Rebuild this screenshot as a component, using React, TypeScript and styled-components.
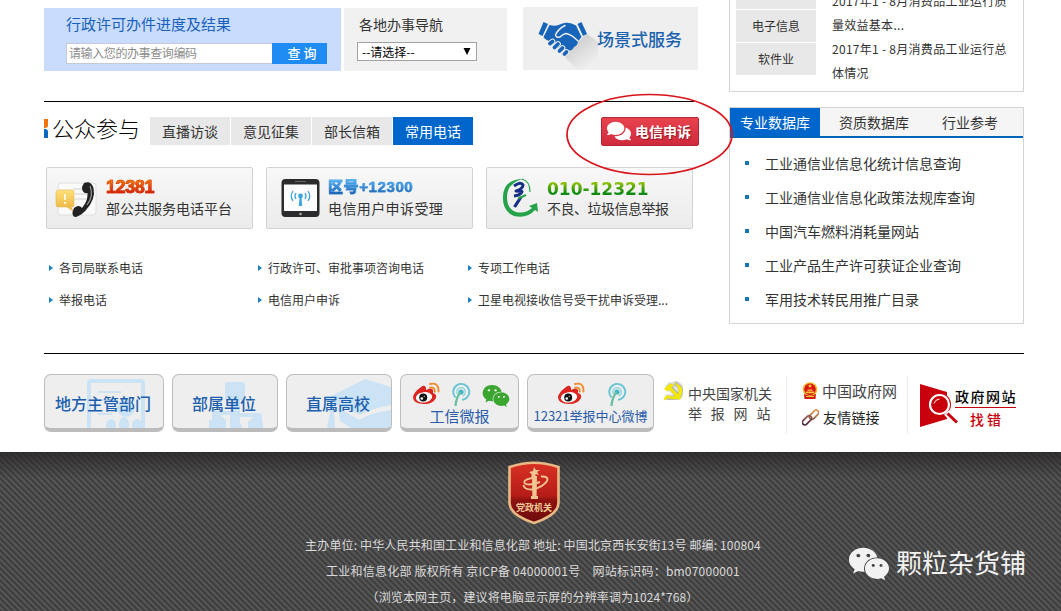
import React from 'react';
import styled, { createGlobalStyle, css } from 'styled-components';
import { FaComments, FaWeixin } from 'react-icons/fa';

const GlobalStyle = createGlobalStyle`
  * { box-sizing: border-box; }
  html, body { margin: 0; padding: 0; background: #fff; }
  body {
    font-family: "Noto Sans CJK SC", sans-serif;
    font-size: 12px;
    color: #333;
    overflow: hidden;
  }
  ul { list-style: none; margin: 0; padding: 0; }
  h2 { margin: 0; }
  svg { display: block; flex: none; }
`;

const Page = styled.div`
  position: relative;
  width: 1061px;
  height: 611px;
  overflow: hidden;
  background: #fff;
`;

const Main = styled.main`
  display: flex;
  justify-content: space-between;
  width: 980px;
  height: 353px;
  margin-left: 44px;
`;

const LeftColumn = styled.div`
  width: 655px;
  padding-top: 7px;
`;

const RightColumn = styled.aside`
  width: 295px;
`;

const Label = styled.span<{ $size?: number; $color?: string; $spacing?: number; $weight?: number }>`
  display: block;
  white-space: nowrap;
  font-size: ${p => p.$size ?? 12}px;
  line-height: 20px;
  color: ${p => p.$color ?? '#333'};
  letter-spacing: ${p => p.$spacing ?? 0}px;
  font-weight: ${p => p.$weight ?? 400};
`;

/* ---------- search strip ---------- */

const ServiceRow = styled.div`
  display: flex;
  height: 64px;
`;

const SearchPanel = styled.section`
  width: 297px;
  height: 63px;
  margin-top: 1px;
  padding: 6px 0 0 22px;
  background: #c9dcfe;
`;

const SearchForm = styled.form`
  display: flex;
  margin-top: 9px;
`;

const SearchInput = styled.input`
  width: 206px;
  height: 21px;
  padding: 0 0 3px 2px;
  border: 1px solid #c3cad6;
  border-right: 0;
  border-radius: 0;
  background: #fff;
  font: 12px "Noto Sans CJK SC", sans-serif;
  letter-spacing: -0.4px;
  &::placeholder { color: #8c8c8c; opacity: 1; }
`;

const SearchButton = styled.button`
  width: 55px;
  height: 21px;
  padding: 0 0 2px 5px;
  border: 0;
  background: #1f8cf4;
  color: #fff;
  font: 500 13px/19px "Noto Sans CJK SC", sans-serif;
`;

const RegionPanel = styled.section`
  width: 163px;
  height: 63px;
  margin: 1px 0 0 3px;
  padding: 6px 0 0 13px;
  background: #f1f1f1;
`;

const RegionTitle = styled(Label)`
  margin-left: 2px;
`;

const SelectBox = styled.div`
  display: flex;
  align-items: center;
  justify-content: space-between;
  width: 120px;
  height: 19px;
  margin-top: 8px;
  padding: 0 5px 0 4px;
  border: 1px solid #a2a2a2;
  background: #fff;
`;

const ScenePanel = styled.section`
  display: flex;
  width: 175px;
  height: 63px;
  margin-left: 16px;
  background: #efefef;
`;

const SceneLabel = styled(Label)`
  margin: 22px 0 0 -1px;
`;

/* ---------- participation ---------- */

const Participation = styled.section`
  width: 650px;
  margin-top: 30px;
  border-top: 1px solid #000;
`;

const TabBar = styled.div`
  display: flex;
  width: 655px;
  height: 29px;
  margin-top: 15px;
`;

const Marks = styled.div`
  display: flex;
  flex: none;
  flex-direction: column;
  gap: 1px;
  width: 4px;
  margin: 2px 4px 0 0;
`;

const Mark = styled.i<{ $color: string; $radius: string }>`
  height: 9px;
  background: ${p => p.$color};
  border-radius: ${p => p.$radius};
`;

const Heading = styled.h2`
  flex: none;
  width: 98px;
  font-size: 22px;
  font-weight: 300;
  line-height: 21px;
  color: #000;
`;

const Tab = styled.div<{ $active?: boolean }>`
  flex: none;
  width: 80px;
  height: 28px;
  margin-right: 1px;
  font-size: 14px;
  line-height: 28px;
  text-align: center;
  background: ${p => (p.$active ? '#0066cc' : '#e8e8e8')};
  color: ${p => (p.$active ? '#fff' : '#333')};
`;

const ComplaintButton = styled.button`
  display: flex;
  align-items: center;
  gap: 4px;
  width: 98px;
  height: 29px;
  margin-left: auto;
  padding: 0 0 1px 5px;
  border: 1px solid #b32738;
  border-radius: 2px;
  background: linear-gradient(#e8424e, #d02b3d);
  color: #fff;
  font: 700 14px/26px "Noto Sans CJK SC", sans-serif;
  text-shadow: 1px 1px 1px #8e1524;
`;

const HotlineRow = styled.div`
  display: flex;
  gap: 13px;
  margin: 21px 0 0 2px;
`;

const Hotline = styled.div<{ $pad: number; $gap: number }>`
  display: flex;
  flex: none;
  align-items: center;
  gap: ${p => p.$gap}px;
  width: 207px;
  height: 62px;
  padding-left: ${p => p.$pad}px;
  border: 1px solid #d3d3d3;
  border-radius: 2px;
  background: linear-gradient(#f8f8f8, #ebebeb);
`;

const numberFace = {
  red: css`
    font: 700 18px/20px "Liberation Sans", sans-serif;
    letter-spacing: -0.4px;
    background-image: linear-gradient(#f87a00 20%, #cf1508 85%);
    -webkit-text-stroke: 0.6px #d8350a;
  `,
  blue: css`
    font: 900 15px/20px "Liberation Sans", "Noto Sans CJK SC", sans-serif;
    letter-spacing: 0.6px;
    background-image: linear-gradient(#55b6f4 20%, #1a5db3 85%);
    -webkit-text-stroke: 0.4px #3388d4;
  `,
  green: css`
    font: 700 17px/24px "DejaVu Sans", sans-serif;
    letter-spacing: 0;
    background-image: linear-gradient(#96c400 25%, #0f8a13 80%);
  `,
};

const HotlineNumber = styled.div<{ $tone: keyof typeof numberFace }>`
  white-space: nowrap;
  height: 20px;
  ${p => numberFace[p.$tone]}
  -webkit-background-clip: text;
  background-clip: text;
  color: transparent;
`;

const HotlineText = styled(Label)`
  line-height: 22px;
`;

const LinkGrid = styled.ul`
  display: grid;
  grid-template-columns: 209px 210px 230px;
  grid-auto-rows: 32px;
  margin: 23px 0 0 5px;
`;

const LinkItem = styled.li`
  display: flex;
  align-items: center;
  gap: 6px;
  font-size: 12px;
  line-height: 32px;
  white-space: nowrap;
`;

const Arrow = styled.i`
  border: 3px solid transparent;
  border-left: 4px solid #1a7fc8;
  border-right: 0;
`;

/* ---------- right column ---------- */

const IndustryPanel = styled.section`
  display: flex;
  height: 92px;
  border: 1px solid #d4d4d4;
  border-top: 0;
  overflow: hidden;
`;

const IndustryTabs = styled.div`
  display: flex;
  flex-direction: column;
  gap: 1px;
  width: 80px;
  margin-left: 6px;
`;

const IndustryTab = styled.div<{ $cut?: boolean }>`
  height: ${p => (p.$cut ? 9 : 32)}px;
  line-height: 31px;
  background: #e8e8e8;
  text-align: center;
`;

const IndustryNews = styled.div`
  margin: -11px 0 0 16px;
  line-height: 24px;
  white-space: nowrap;
  letter-spacing: 0.28px;
`;

const DataPanel = styled.section`
  height: 217px;
  margin-top: 15px;
  border: 1px solid #d4d4d4;
`;

const DataTabs = styled.div`
  display: flex;
  height: 30px;
  background: #f5f5f5;
  border-bottom: 2px solid #0066b8;
`;

const DataTab = styled.div<{ $active?: boolean; $width: number }>`
  width: ${p => p.$width}px;
  height: 28px;
  font-size: 14px;
  line-height: 29px;
  text-align: center;
  background: ${p => (p.$active ? '#0066cc' : 'transparent')};
  color: ${p => (p.$active ? '#fff' : '#333')};
`;

const DataList = styled.ul`
  padding: 8px 0 0 15px;
`;

const DataItem = styled.li`
  display: flex;
  align-items: center;
  gap: 16px;
  height: 34px;
  font-size: 14px;
  white-space: nowrap;
  &::before {
    content: '';
    width: 4px;
    height: 4px;
    background: #1974b4;
    margin-top: -1px;
  }
`;

/* ---------- bottom row ---------- */

const BottomRow = styled.section`
  display: flex;
  width: 980px;
  height: 99px;
  margin-left: 44px;
  border-top: 1px solid #000;
  padding-top: 20px;
`;

const TileBox = styled.div<{ $width: number }>`
  position: relative;
  flex: none;
  width: ${p => p.$width}px;
  height: 58px;
  margin-right: 8px;
  border: 1px solid #bdbdbd;
  border-bottom: 4px solid #bcbcbc;
  border-radius: 7px;
  background: #eeeeee;
  overflow: hidden;
`;

const TileArt = styled.svg`
  position: absolute;
  right: 0;
  bottom: 0;
`;

const TileCaption = styled.div`
  position: relative;
  padding-top: 16px;
  text-align: center;
  font-size: 16px;
  line-height: 24px;
  color: #1b5fae;
  font-weight: 500;
  text-indent: -2px;
`;

const SocialIcons = styled.div<{ $gap: number }>`
  display: flex;
  justify-content: center;
  align-items: flex-start;
  gap: ${p => p.$gap}px;
  height: 30px;
  padding: 7px 0 0 2px;
`;

const SocialCaption = styled.div<{ $size: number }>`
  text-align: center;
  white-space: nowrap;
  font-size: ${p => p.$size}px;
  line-height: 21px;
  color: #2a5cab;
`;

const Report = styled.div`
  display: flex;
  flex: none;
  gap: 3px;
  width: 125px;
  height: 58px;
  margin-top: 2px;
  padding-top: 4px;
  border-right: 1px solid #ececec;
`;

const ReportText = styled.div`
  padding-top: 3px;
  margin-left: -1px;
`;

const PortalLinks = styled.div`
  flex: none;
  width: 121px;
  height: 58px;
  margin-top: 2px;
  padding: 2px 0 0 15px;
  border-right: 1px solid #ececec;
`;

const PortalLink = styled.div`
  display: flex;
  align-items: center;
  gap: 4px;
  height: 26px;
`;

const ErrorReport = styled.div`
  display: flex;
  padding: 10px 0 0 12px;
`;

const ErrorText = styled.div`
  width: 61px;
  margin: 1px 0 0 -4px;
`;

const ErrorTitle = styled(Label)`
  border-bottom: 1px solid #c8000b;
  line-height: 22px;
`;

const ErrorAction = styled(Label)`
  padding-left: 15px;
  line-height: 22px;
`;

/* ---------- footer ---------- */

const Footer = styled.footer`
  position: relative;
  display: flex;
  flex-direction: column;
  align-items: center;
  height: 159px;
  padding-top: 9px;
  background:
    linear-gradient(rgba(40, 36, 36, 0.75), rgba(50, 50, 50, 0) 26px),
    repeating-linear-gradient(45deg, #3f3f3f 0 1.2px, #595959 2.4px 3px, #3f3f3f 4.243px);
`;

const FooterLines = styled.div`
  display: flex;
  flex-direction: column;
  align-items: center;
  margin-top: 7px;
`;

const FooterLine = styled.p<{ $spacing: number; $shift?: number }>`
  margin: 0 0 0 ${p => p.$shift ?? 0}px;
  height: 26px;
  line-height: 26px;
  font-size: 12px;
  letter-spacing: ${p => p.$spacing}px;
  color: #dadada;
  white-space: pre;
`;

const Watermark = styled.div`
  position: absolute;
  left: 848px;
  top: 91px;
  display: flex;
  align-items: center;
  gap: 6px;
  color: #f2f2f2;
  font-size: 26px;
  line-height: 36px;
  white-space: nowrap;
`;

const WatermarkName = styled.span`
  margin-top: -4px;
`;

const Circled = styled.svg`
  position: absolute;
  left: 564px;
  top: 91px;
`;

/* ---------- drawings ---------- */

const Handshake = () => (
  <svg width="75" height="63" viewBox="0 0 75 63">
    <defs>
      <linearGradient id="shade" x1="0" y1="0" x2="1" y2="1">
        <stop offset="0.2" stopColor="#c4c4c4" />
        <stop offset=".85" stopColor="#efefef" />
      </linearGradient>
    </defs>
    <path d="M26 35 L43 46 L64 27 L75 35 V63 H55Z" fill="url(#shade)" />
    <g fill="#1764b8">
      <path d="M20.500 15 L25 17 L19.500 29 L15.500 27Z" />
      <path d="M58.500 15 L64 27 L60 29 L54.500 17Z" />
      <path d="M26.500 18 Q33 20 38 17 Q46 14 53 18.500 L58.500 30 Q56 33 55 35 Q54 39 51 40 Q49 44 46 43.500 L42 47 L38 43 L29 35 Q22 33 20.500 30Z" />
    </g>
    <g fill="none" stroke="#efefef" strokeWidth="1.500" strokeLinecap="round" strokeLinejoin="round">
      <path d="M42 18.500 Q35 22 32.500 28 Q33 31 37 30 Q40 27 43 26.500 Q48 27 55 34" />
    </g>
    <g stroke="#efefef" strokeWidth="5.800" strokeLinecap="round">
      <path d="M27 36.500 L29.500 34.500 M31.500 40.500 L35 37 M36.500 44 L39.500 41 M41.500 47 L43.500 45" />
    </g>
    <g stroke="#1764b8" strokeWidth="3.800" strokeLinecap="round">
      <path d="M27 36.500 L29.500 34.500 M31.500 40.500 L35 37 M36.500 44 L39.500 41 M41.500 47 L43.500 45" />
    </g>
  </svg>
);

const PhoneIcon = () => (
  <svg width="42" height="44" viewBox="0 0 42 44">
    <defs>
      <linearGradient id="note" x1="0" y1="0" x2="0" y2="1">
        <stop offset="0" stopColor="#ffe17b" />
        <stop offset="1" stopColor="#eab13b" />
      </linearGradient>
    </defs>
    <rect x="3" y="7" width="38" height="32" rx="3" fill="#fafafa" stroke="#e0e0e0" />
    <path d="M18 13h14M20 18h12M20 23h11" stroke="#cfcfcf" />
    <path d="M4 14h13q2 0 2 2v13q0 2-2 2h-1l2 4-6-4H4q-3 0-3-2V16q0-2 3-2z" fill="url(#note)" stroke="#e8bb58" strokeWidth=".6" />
    <path d="M10 18v6M10 26v2" stroke="#fff" strokeWidth="1.600" />
    <path d="M29 7 Q36 4 38.500 12 Q41 23 31 34 Q27 39 21 41 Q17 41 17.500 36 L19 32 Q24 28 27 32 Q33 25 32.500 17 Q27 18 27 11Z" fill="#222" />
    <path d="M35 10 Q39 20 32 29" stroke="#999" strokeWidth="1.2" fill="none" />
  </svg>
);

const TabletIcon = () => (
  <svg width="39" height="40" viewBox="0 0 39 40">
    <rect x=".5" y="1" width="38" height="38" rx="4" fill="#2c2c2e" />
    <path d="M3 6.5h33V33H3z" fill="#fdfdfd" />
    <path d="M14 3.5h11" stroke="#666" />
    <circle cx="19.500" cy="36" r="1.300" fill="#aaa" />
    <g fill="none" stroke="#3aa7dc" strokeWidth="1.3">
      <path d="M15 15q-2 3 0 6M24 15q2 3 0 6M12 13q-3.500 5 0 10M27 13q3.500 5 0 10" />
    </g>
    <circle cx="19.500" cy="18" r="2.400" fill="#3aa7dc" />
    <path d="M18.500 19h2l.7 9h-3.400z" fill="#3aa7dc" />
  </svg>
);

const SwirlIcon = () => (
  <svg width="38" height="40" viewBox="0 0 38 40">
    <path d="M22 1 Q3 1 2 18 Q1 33 13 38 Q26 41 34 32 L37 34 L36 25 L28 28 L31 30 Q24 36 15 34 Q6 31 6 19 Q6 5 22 1Z" fill="#26a34a" />
    <path d="M21 1 Q29 3 29 14" fill="none" stroke="#26a34a" strokeWidth="1.200" />
    <path d="M13 8 Q20 3 22 7 Q22 11 15 13 L21 13.500 Q20 17 13 18" fill="none" stroke="#172e87" strokeWidth="3" strokeLinejoin="round" />
    <path d="M13.500 29 L20 19" stroke="#172e87" strokeWidth="3.200" />
    <path d="M17 20.500 L25 17" stroke="#26a34a" strokeWidth="2" />
  </svg>
);

const WeiboIcon = () => (
  <svg width="28" height="24" viewBox="0 0 28 24">
    <path d="M9 5 Q13 2 14 6 L14 8 Q19 5 21 8 L21 11 Q25 12 24 16 Q21 22 12 22 Q1 22 1 15 Q2 10 9 5Z" fill="#dc2520" />
    <ellipse cx="12" cy="15.300" rx="8.200" ry="5.200" fill="#fff" transform="rotate(-7 12 15)" />
    <circle cx="11.200" cy="15.600" r="4" fill="#111" />
    <circle cx="9.800" cy="16.500" r="1.300" fill="#fff" />
    <circle cx="12.200" cy="14.300" r=".6" fill="#fff" />
    <path d="M18 2 Q27 0 26.500 9.500 M18 5.600 Q23 5 22.800 9.600" fill="none" stroke="#f08a2c" strokeWidth="1.900" strokeLinecap="round" />
  </svg>
);

const MicroblogPin = () => (
  <svg width="20" height="25" viewBox="0 0 20 25">
    <path d="M4.500 15.500 A8 8 0 1 1 11 17.900" fill="none" stroke="#68c4d2" strokeWidth="1.900" />
    <path d="M6.200 12 A4.300 4.300 0 1 1 11.500 14" fill="none" stroke="#8dd3dc" strokeWidth="1.300" />
    <circle cx="10" cy="10" r="2.600" fill="#42b5c4" />
    <path d="M9.500 10 Q5 16 4.500 24" fill="none" stroke="#68bfa0" strokeWidth="2.200" />
  </svg>
);

const PartyEmblem = () => (
  <svg width="24" height="24" viewBox="0 0 24 24">
    <defs>
      <filter id="glow"><feGaussianBlur stdDeviation="1" /></filter>
    </defs>
    <g fill="none" stroke="#a5a5a5" strokeWidth="4.500" filter="url(#glow)">
      <path d="M12 3 Q22 7 18 15 Q14 20 4 17 M5 9l5-5M8 7l9 10" />
    </g>
    <path d="M11 2.500 Q22 5 20 13.500 Q17 22 6 18 L3 20.500 L1.500 18.500 L5.500 15 Q13 19 16.500 13 Q18 7 11 2.500Z" fill="#f3e900" />
    <path d="M2 9 L8 3.500 L12 5 L9.500 7.500 L19.500 18 L17 20 L7 9.500 L5.500 11.500Z" fill="#f3e900" />
  </svg>
);

const NationalEmblem = () => (
  <svg width="16" height="18" viewBox="0 0 16 18">
    <circle cx="8" cy="7.500" r="7.300" fill="#eebc29" />
    <circle cx="8" cy="7.300" r="5.800" fill="#dc1414" />
    <path d="M2 12 Q8 15.500 14 12 L13.500 17 H2.500Z" fill="#d61a14" />
    <path d="M8 1.700l.7 1.500h1.600L9 4.200l.5 1.600L8 4.900l-1.500.9.5-1.600-1.300-1h1.600zM4 9.500h8v1.700H4zM5.500 7.500h5v1.200h-5zM4 14h8v1H4z" fill="#f4cb3c" />
  </svg>
);

const ChainIcon = () => (
  <svg width="17" height="17" viewBox="0 0 17 17">
    <defs>
      <linearGradient id="chain" gradientUnits="userSpaceOnUse" x1="15" y1="2" x2="2" y2="15">
        <stop offset="0" stopColor="#e59a55" />
        <stop offset="1" stopColor="#45203f" />
      </linearGradient>
    </defs>
    <g fill="none" stroke="url(#chain)" strokeWidth="1.700">
      <rect x="6.500" y="3.200" width="11" height="5" rx="2.500" transform="rotate(-45 12 5.700)" />
      <rect x="-.5" y="8.800" width="11" height="5" rx="2.500" transform="rotate(-45 5 11.300)" />
    </g>
  </svg>
);

const MagnifierMark = () => (
  <svg width="39" height="44" viewBox="0 0 39 44">
    <path d="M0 0 L27 8 V35 L0 43Z" fill="#c8000b" />
    <circle cx="19.500" cy="20.500" r="11.500" fill="#c8000b" />
    <path d="M26.500 28.500 L37 40" stroke="#fff" strokeWidth="6.500" />
    <circle cx="19.500" cy="20.500" r="9.500" fill="#c8000b" stroke="#fff" strokeWidth="2.200" />
    <path d="M27.500 29.500 L37 38.500" stroke="#c8000b" strokeWidth="3" />
    <path d="M14 19.500 Q15 15.500 19.500 15" stroke="#fff" strokeWidth="1" fill="none" />
  </svg>
);

const ShieldText = styled.text`
  font: 700 9px "Noto Sans CJK SC", sans-serif;
  fill: #f2c997;
`;

const ShieldSvg = styled.svg`
  margin-left: 6px;
`;

const Shield = () => (
  <ShieldSvg width="54" height="64" viewBox="0 0 54 64">
    <defs>
      <linearGradient id="shield" x1="0" y1="0" x2="0" y2="1">
        <stop offset="0" stopColor="#d93123" />
        <stop offset=".55" stopColor="#b51c18" />
        <stop offset=".62" stopColor="#8e1211" />
        <stop offset="1" stopColor="#6c0a0b" />
      </linearGradient>
    </defs>
    <path d="M2.500 6 Q16 1.800 27 1.800 Q38 1.800 51.500 6 V42 Q51 54 27 62 Q3 54 2.500 42Z" fill="url(#shield)" stroke="#e9b985" strokeWidth="2.600" />
    <g fill="#f0c592">
      <path d="M25 15h5l-.4 20h1.400v3h-7v-3h1.300z" />
      <path d="M22 11l4-1 1-4 2 3 4 0-3 2 2 3-3.500-1V16h-4v-3z" />
    </g>
    <path d="M25 17 Q15 19 18 22.500 Q22 25 33 21 M34 15.500 Q42 15 40 20 Q36 26 26 28.500 Q17 29 16.500 24" fill="none" stroke="#f0c592" strokeWidth="1.900" />
    <ShieldText x="9" y="50">党政机关</ShieldText>
  </ShieldSvg>
);

const FormArt = () => (
  <TileArt width="77" height="54" viewBox="0 0 77 54">
    <g fill="none" stroke="#cbe3f4" strokeWidth="4">
      <path d="M3 54 V9 Q3 7 5 7 H55 Q57 7 57 9 V54" />
      <path d="M12 18h23M12 26h18M12 40h14" strokeWidth="2" />
    </g>
    <g fill="#cbe3f4">
      <circle cx="40" cy="34" r="9" />
      <ellipse cx="25" cy="51" rx="5" ry="6" />
      <ellipse cx="38" cy="51" rx="5" ry="8" />
      <ellipse cx="51" cy="51" rx="5" ry="6" />
    </g>
  </TileArt>
);

const OrgArt = () => (
  <TileArt width="72" height="54" viewBox="0 0 72 54">
    <path d="M20 10 q0-2 2-2h16q2 0 2 2v16H35v13h19q3 0 3 3v6h1v8H43v-8l5-5H35v5l3 8H25V41H15l6 5v8H4v-8h3v-6q0-3 3-3h17V26h-7z" fill="#cbe3f4" />
  </TileArt>
);

const CapArt = () => (
  <TileArt width="72" height="54" viewBox="0 0 72 54">
    <path d="M6 25 L46 5 L72 13 V31 Q54 34 41 41 L15 30 V39 L16 54 H8 L11 39 V28Z M18 33 Q20 36 21 47 L32 54 H72 V36 Q54 38 40 46Z" fill="#cbe3f4" />
  </TileArt>
);

const tiles = [
  { width: 120, text: '地方主管部门', Art: FormArt },
  { width: 106, text: '部属单位', Art: OrgArt },
  { width: 106, text: '直属高校', Art: CapArt },
];

const hotlineLinks = [
  '各司局联系电话', '行政许可、审批事项咨询电话', '专项工作电话',
  '举报电话', '电信用户申诉', '卫星电视接收信号受干扰申诉受理...',
];

const databases = [
  '工业通信业信息化统计信息查询', '工业通信业信息化政策法规库查询', '中国汽车燃料消耗量网站',
  '工业产品生产许可获证企业查询', '军用技术转民用推广目录',
];

export default function App() {
  return (
    <Page>
      <GlobalStyle />
      <Main>
        <LeftColumn>
          <ServiceRow>
            <SearchPanel>
              <Label $size={15} $color="#1761bd">行政许可办件进度及结果</Label>
              <SearchForm>
                <SearchInput placeholder="请输入您的办事查询编码" />
                <SearchButton type="button">查 询</SearchButton>
              </SearchForm>
            </SearchPanel>
            <RegionPanel>
              <RegionTitle $size={14}>各地办事导航</RegionTitle>
              <SelectBox>
                <Label $color="#000">--请选择--</Label>
                <svg width="8" height="7" viewBox="0 0 8 7"><path d="M.5 0h7L4 7z" fill="#000" /></svg>
              </SelectBox>
            </RegionPanel>
            <ScenePanel>
              <Handshake />
              <SceneLabel $size={17} $color="#1b62ae" $weight={500}>场景式服务</SceneLabel>
            </ScenePanel>
          </ServiceRow>

          <Participation>
            <TabBar>
              <Marks>
                <Mark $color="#f0720d" $radius="0 0 3px 0" />
                <Mark $color="#0867bd" $radius="0 3px 0 0" />
              </Marks>
              <Heading>公众参与</Heading>
              <Tab>直播访谈</Tab>
              <Tab>意见征集</Tab>
              <Tab>部长信箱</Tab>
              <Tab $active>常用电话</Tab>
              <ComplaintButton><FaComments size={24} />电信申诉</ComplaintButton>
            </TabBar>

            <HotlineRow>
              <Hotline $pad={8} $gap={9}>
                <PhoneIcon />
                <div>
                  <HotlineNumber $tone="red">12381</HotlineNumber>
                  <HotlineText $size={14}>部公共服务电话平台</HotlineText>
                </div>
              </Hotline>
              <Hotline $pad={14} $gap={8}>
                <TabletIcon />
                <div>
                  <HotlineNumber $tone="blue">区号+12300</HotlineNumber>
                  <HotlineText $size={14} $spacing={0.4}>电信用户申诉受理</HotlineText>
                </div>
              </Hotline>
              <Hotline $pad={14} $gap={8}>
                <SwirlIcon />
                <div>
                  <HotlineNumber $tone="green">010-12321</HotlineNumber>
                  <HotlineText $size={14} $spacing={-0.5}>不良、垃圾信息举报</HotlineText>
                </div>
              </Hotline>
            </HotlineRow>

            <LinkGrid>
              {hotlineLinks.map(text => (
                <LinkItem key={text}><Arrow />{text}</LinkItem>
              ))}
            </LinkGrid>
          </Participation>
        </LeftColumn>

        <RightColumn>
          <IndustryPanel>
            <IndustryTabs>
              <IndustryTab $cut />
              <IndustryTab>电子信息</IndustryTab>
              <IndustryTab>软件业</IndustryTab>
            </IndustryTabs>
            <IndustryNews>
              <div>2017年1 - 8月消费品工业运行质</div>
              <div>量效益基本...</div>
              <div>2017年1 - 8月消费品工业运行总</div>
              <div>体情况</div>
            </IndustryNews>
          </IndustryPanel>
          <DataPanel>
            <DataTabs>
              <DataTab $active $width={90}>专业数据库</DataTab>
              <DataTab $width={108}>资质数据库</DataTab>
              <DataTab $width={84}>行业参考</DataTab>
            </DataTabs>
            <DataList>
              {databases.map(text => <DataItem key={text}>{text}</DataItem>)}
            </DataList>
          </DataPanel>
        </RightColumn>
      </Main>

      <BottomRow>
        {tiles.map(({ width, text, Art }) => (
          <TileBox key={text} $width={width}>
            <Art />
            <TileCaption>{text}</TileCaption>
          </TileBox>
        ))}
        <TileBox $width={119}>
          <SocialIcons $gap={11}>
            <WeiboIcon />
            <MicroblogPin />
            <FaWeixin size={28} color="#3aa52f" />
          </SocialIcons>
          <SocialCaption $size={15}>工信微报</SocialCaption>
        </TileBox>
        <TileBox $width={127}>
          <SocialIcons $gap={22}>
            <WeiboIcon />
            <MicroblogPin />
          </SocialIcons>
          <SocialCaption $size={13}>12321举报中心微博</SocialCaption>
        </TileBox>
        <Report>
          <PartyEmblem />
          <ReportText>
            <Label $size={14} $color="#444">中央国家机关</Label>
            <Label $size={14} $color="#444" $spacing={8.8}>举报网站</Label>
          </ReportText>
        </Report>
        <PortalLinks>
          <PortalLink><NationalEmblem /><Label $size={15} $color="#444">中国政府网</Label></PortalLink>
          <PortalLink><ChainIcon /><Label $size={14} $color="#222" $spacing={0.2}>友情链接</Label></PortalLink>
        </PortalLinks>
        <ErrorReport>
          <MagnifierMark />
          <ErrorText>
            <ErrorTitle $size={14} $spacing={1.5} $color="#000" $weight={500}>政府网站</ErrorTitle>
            <ErrorAction $size={14} $spacing={3} $color="#c8000b" $weight={500}>找错</ErrorAction>
          </ErrorText>
        </ErrorReport>
      </BottomRow>

      <Footer>
        <Shield />
        <FooterLines>
          <FooterLine $spacing={0.15} $shift={5}>主办单位: 中华人民共和国工业和信息化部 地址: 中国北京西长安街13号 邮编: 100804</FooterLine>
          <FooterLine $spacing={0.22} $shift={5}>工业和信息化部 版权所有 京ICP备 04000001号　网站标识码：bm07000001</FooterLine>
          <FooterLine $spacing={0.12} $shift={4}>（浏览本网主页，建议将电脑显示屏的分辨率调为1024*768）</FooterLine>
        </FooterLines>
        <Watermark><FaWeixin size={42} /><WatermarkName>颗粒杂货铺</WatermarkName></Watermark>
      </Footer>

      <Circled width="172" height="88" viewBox="0 0 172 88">
        <ellipse cx="85.500" cy="43.500" rx="82.500" ry="40" fill="none" stroke="#d9141b" strokeWidth="1.700" />
      </Circled>
    </Page>
  );
}
